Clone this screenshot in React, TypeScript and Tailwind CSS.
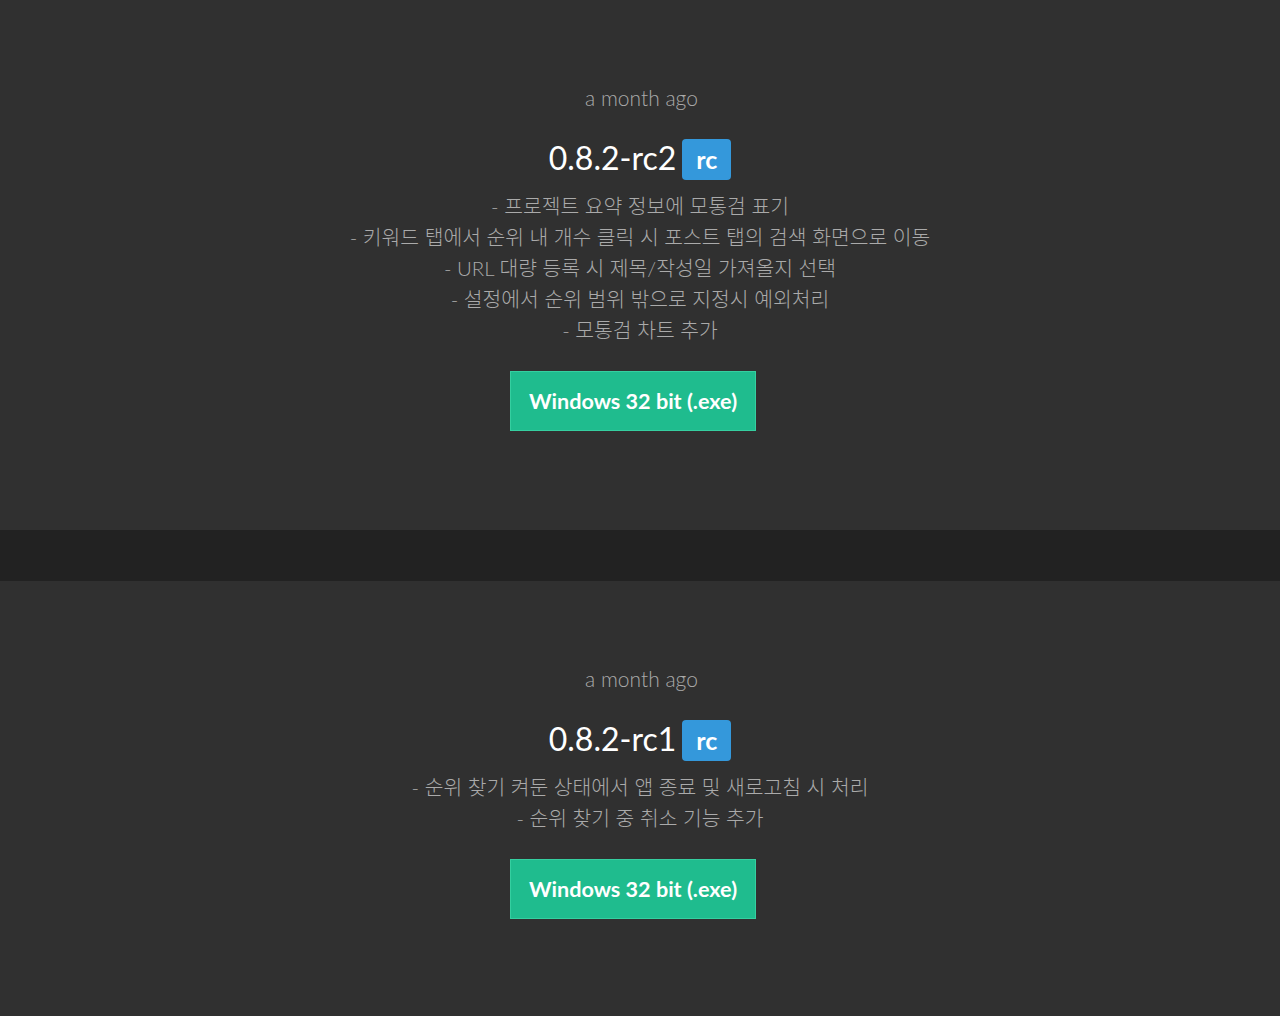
import React from "react";

interface Release {
  version: string;
  when: string;
  notes: string[];
}

const releases: Release[] = [
  {
    version: "0.8.2-rc2",
    when: "a month ago",
    notes: [
      "- 프로젝트 요약 정보에 모통검 표기",
      "- 키워드 탭에서 순위 내 개수 클릭 시 포스트 탭의 검색 화면으로 이동",
      "- URL 대량 등록 시 제목/작성일 가져올지 선택",
      "- 설정에서 순위 범위 밖으로 지정시 예외처리",
      "- 모통검 차트 추가",
    ],
  },
  {
    version: "0.8.2-rc1",
    when: "a month ago",
    notes: [
      "- 순위 찾기 켜둔 상태에서 앱 종료 및 새로고침 시 처리",
      "- 순위 찾기 중 취소 기능 추가",
    ],
  },
];

const ReleaseBlock = ({ release }: { release: Release }) => (
  <section className="bg-[#303030] flex flex-col items-center pt-[84px] pb-[99px]">
    <div className="pl-[3px] text-[21px] leading-[28px] font-light text-[#aaaaaa]">{release.when}</div>
    <div className="mt-[25px] flex items-center gap-[6px] h-[44px]">
      <h2 className="text-[32px] leading-[44px] font-normal text-white -mt-[3px]">{release.version}</h2>
      <span className="h-[41px] px-[14px] rounded-[4px] bg-[#3498db] text-white font-bold text-[25px] leading-[41px]">
        rc
      </span>
    </div>
    <div className="mt-[10px] flex flex-col items-center text-[20.4px] leading-[31px] font-light text-[#aaaaaa]">
      {release.notes.map((note, i) => (
        <p key={i}>{note}</p>
      ))}
    </div>
    <div className="mt-[25px] pr-[14px]">
      <button className="h-[60px] w-[246px] bg-[#1fbc8e] border border-[#35cfa0] text-white font-bold text-[21.6px]">
        Windows 32 bit (.exe)
      </button>
    </div>
  </section>
);

export default function App() {
  return (
    <div
      className="min-h-screen bg-[#303030]"
      style={{ fontFamily: "Lato, 'Noto Sans CJK KR', sans-serif" }}
    >
      <ReleaseBlock release={releases[0]} />
      <div className="h-[51px] bg-[#222222]" />
      <ReleaseBlock release={releases[1]} />
    </div>
  );
}
